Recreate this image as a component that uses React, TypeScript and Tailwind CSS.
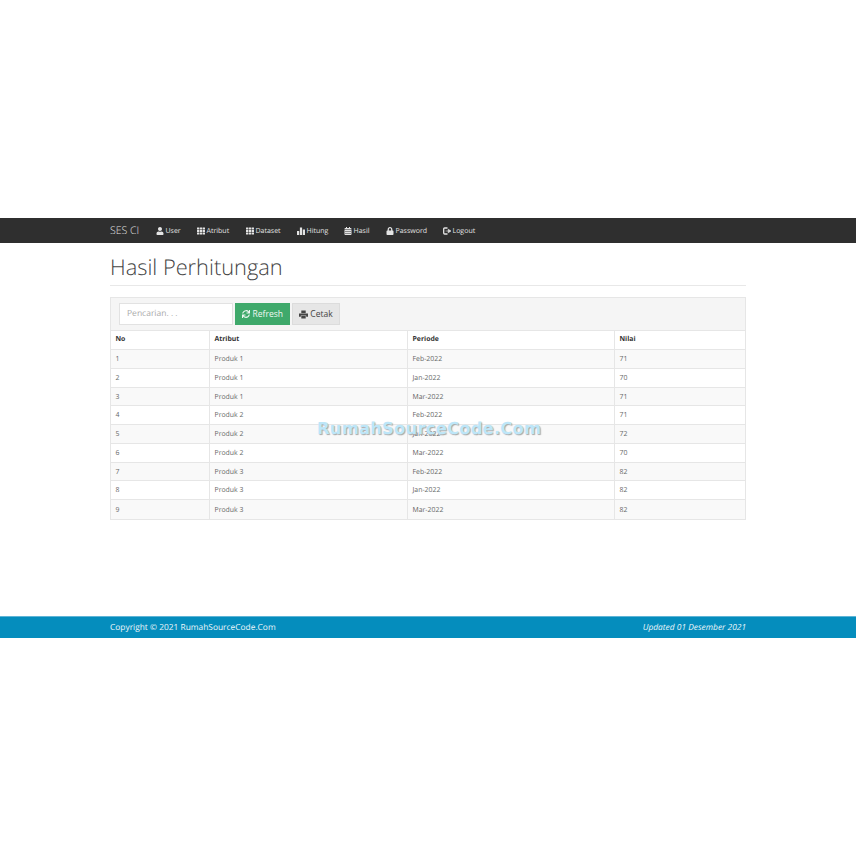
import React from "react";
import { FaUser, FaTh, FaCalendarAlt, FaLock, FaSync } from "react-icons/fa";

const Bars = () => (
  <svg width="8" height="8" viewBox="0 0 8 8" fill="currentColor"><rect x="0" y="4" width="2.2" height="4" /><rect x="2.9" y="0.5" width="2.2" height="7.5" /><rect x="5.8" y="2.5" width="2.2" height="5.5" /></svg>
);
const LogOut = () => (
  <svg width="8" height="8" viewBox="0 0 8 8" fill="none" stroke="currentColor"><path d="M4.5 1H1.7C1 1 .7 1.4.7 2v4c0 .6.3 1 1 1h2.8" strokeWidth="1.3" /><path d="M2.6 4h2.6V2.2L8 4 5.2 5.8V4" fill="currentColor" strokeWidth=".6" /></svg>
);
const Printer = () => (
  <svg width="9" height="9" viewBox="0 0 9 9" fill="currentColor"><rect x="2.3" y="0.5" width="4.4" height="2.6" /><path d="M0 3.4h9v3.4H7.2V5.4H1.8v1.4H0z" /><rect x="2.3" y="5.9" width="4.4" height="2.6" /></svg>
);

const nav: [React.ReactNode, string][] = [
  [<FaUser size={8} />, "User"],
  [<FaTh size={8} />, "Atribut"],
  [<FaTh size={8} />, "Dataset"],
  [<Bars />, "Hitung"],
  [<FaCalendarAlt size={8} />, "Hasil"],
  [<FaLock size={8} />, "Password"],
  [<LogOut />, "Logout"],
];

const rows = [
  [1, "Produk 1", "Feb-2022", 71],
  [2, "Produk 1", "Jan-2022", 70],
  [3, "Produk 1", "Mar-2022", 71],
  [4, "Produk 2", "Feb-2022", 71],
  [5, "Produk 2", "Jan-2022", 72],
  [6, "Produk 2", "Mar-2022", 70],
  [7, "Produk 3", "Feb-2022", 82],
  [8, "Produk 3", "Jan-2022", 82],
  [9, "Produk 3", "Mar-2022", 82],
];

const Cell = ({ w, children, bold }: { w: string; children: React.ReactNode; bold?: boolean }) => (
  <div className={`${w} flex items-center pl-[4.5px] border-r border-[#e6e6e6] last:border-r-0 ${bold ? "pt-px font-bold text-[#333]" : "pt-[3px] text-[#666]"}`}>{children}</div>
);

export default function App() {
  return (
    <div className="relative min-h-[856px] bg-white pt-[218px] antialiased [text-rendering:geometricPrecision] font-['Open_Sans',sans-serif]">
      <nav className="h-[25px] bg-[#2f2f2f] flex items-center pl-[110px] text-[#e4e4e4]">
        <span className="text-[10.5px] font-light w-[46px] pt-[3px]">SES CI</span>
        <div className="flex text-[7px]">
          {[0, 1, 2, 3, 4, 5, 6].map((i) => (
            <span key={i} className={`flex items-center gap-[1.5px] ${["w-[41px]", "w-[49px]", "w-[51px]", "w-[47px]", "w-[42px]", "w-[57px]", "w-[40px]"][i]}`}>
              {nav[i][0]}
              <span className="pt-[3px]">{nav[i][1]}</span>
            </span>
          ))}
        </div>
      </nav>

      <main className="mx-[110px] w-[636px] h-[373px]">
        <div className="h-[43px] border-b border-[#e8e8e8] flex items-end pb-[2px]">
          <h1 className="text-[21.8px] font-light leading-[30px] text-[#444]">Hasil Perhitungan</h1>
        </div>

        <section className="mt-[11px] border border-[#e6e6e6] text-[6.9px]">
          <div className="h-[33px] bg-[#f5f5f5] flex items-center pl-[8px] gap-[2px] border-b border-[#e6e6e6]">
            <div className="w-[114px] h-[22px] bg-white border border-[#e2e2e2] flex items-center pl-[7px] text-[8.5px] text-[#aaa]">Pencarian. . .</div>
            <button className="w-[55px] h-[22px] bg-[#3fa96b] text-[#f0f8f3] text-[8.5px] flex items-center justify-center gap-[2.5px]">
              <FaSync size={8} />
              Refresh
            </button>
            <button className="w-[48px] h-[22px] bg-[#e6e6e6] border border-[#dcdcdc] text-[#444] text-[8.5px] flex items-center justify-center gap-[2px]">
              <Printer />
              Cetak
            </button>
          </div>
          <div className="flex h-[19px] border-b border-[#e6e6e6] bg-white">
            <Cell w="w-[99px]" bold>No</Cell>
            <Cell w="w-[198px]" bold>Atribut</Cell>
            <Cell w="w-[207px]" bold>Periode</Cell>
            <Cell w="flex-1" bold>Nilai</Cell>
          </div>
          {rows.map((r, i) => (
            <div key={i} className={`flex h-[18.75px] border-b border-[#e6e6e6] last:border-b-0 ${i % 2 === 0 ? "bg-[#f9f9f9]" : "bg-white"}`}>
              <Cell w="w-[99px]">{r[0]}</Cell>
              <Cell w="w-[198px]">{r[1]}</Cell>
              <Cell w="w-[207px]">{r[2]}</Cell>
              <Cell w="flex-1">{r[3]}</Cell>
            </div>
          ))}
        </section>
      </main>

      <footer className="h-[22px] pt-px border-t border-[#5fb4d6] bg-[#058dbd] flex items-center justify-between px-[110px] text-[8.4px] text-[#edf7fb]">
        <span>Copyright © 2021 RumahSourceCode.Com</span>
        <span className="italic">Updated 01 Desember 2021</span>
      </footer>

      <div className="absolute left-[317px] top-[418px] text-[16.4px] leading-[22px] font-bold tracking-[0.2px] text-[#bde6f8] font-['DejaVu_Sans',sans-serif] [text-shadow:1px_1px_1px_#a8a8a8] whitespace-nowrap">
        RumahSourceCode.Com
      </div>
    </div>
  );
}
